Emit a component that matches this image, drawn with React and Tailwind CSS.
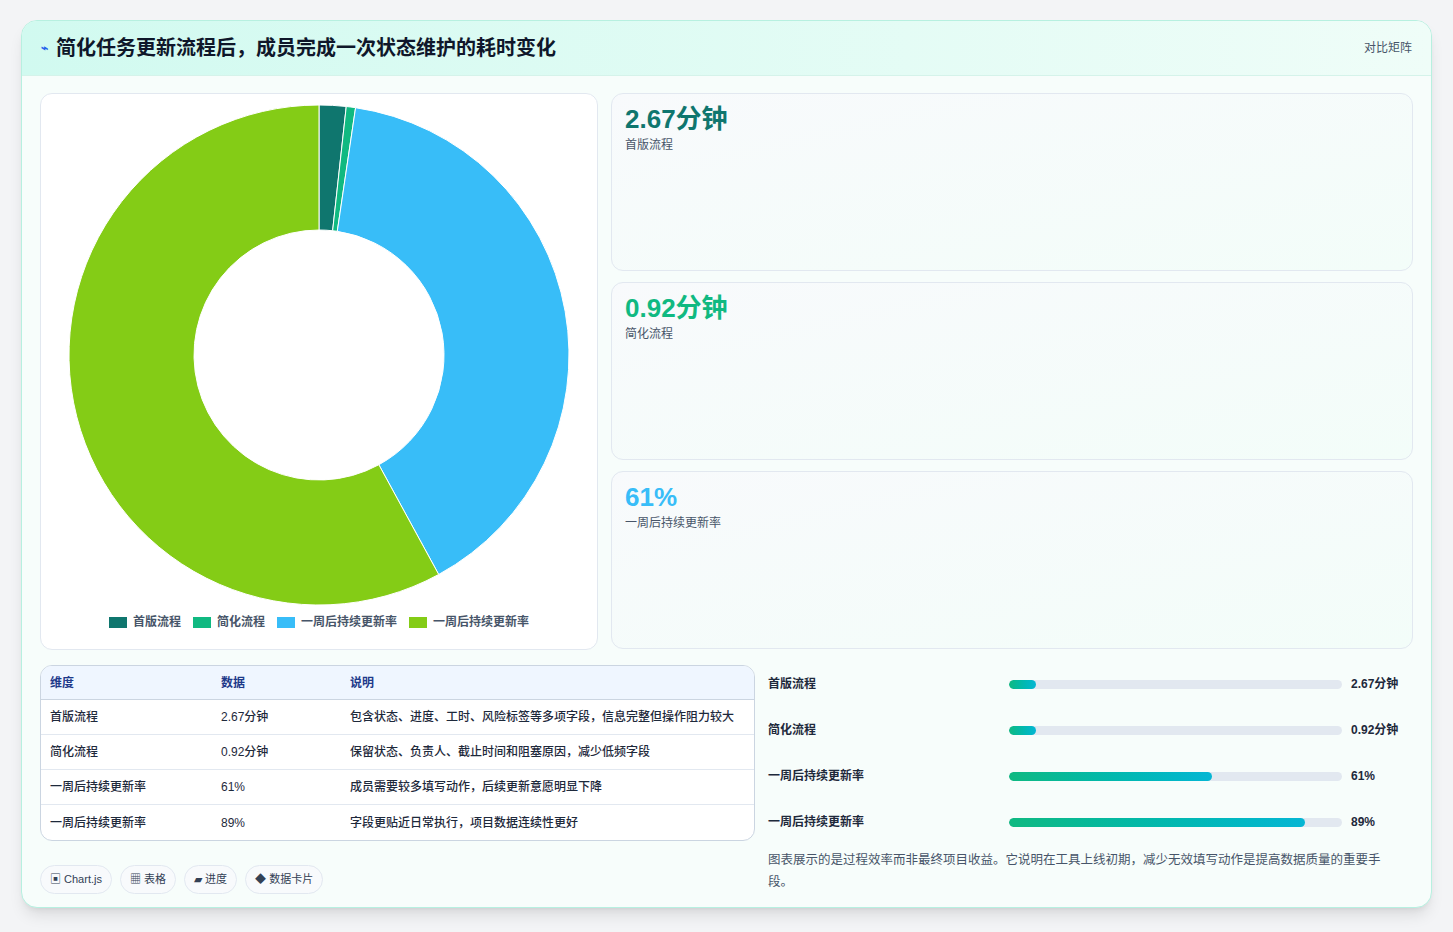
import React from "react";

const data = [
  { k: "首版流程", v: "2.67分钟", n: 2.67, c: "#0f766e", d: "包含状态、进度、工时、风险标签等多项字段，信息完整但操作阻力较大", p: 8 },
  { k: "简化流程", v: "0.92分钟", n: 0.92, c: "#10b981", d: "保留状态、负责人、截止时间和阻塞原因，减少低频字段", p: 8 },
  { k: "一周后持续更新率", v: "61%", n: 61, c: "#38bdf8", d: "成员需要较多填写动作，后续更新意愿明显下降", p: 61 },
  { k: "一周后持续更新率", v: "89%", n: 89, c: "#84cc16", d: "字段更贴近日常执行，项目数据连续性更好", p: 89 },
];

function Donut() {
  const total = data.reduce((s, d) => s + d.n, 0);
  const cx = 250, cy = 250, R = 250, r = 125;
  let a = 0;
  const pt = (ang, rad) => [cx + rad * Math.sin(ang), cy - rad * Math.cos(ang)];
  return (
    <svg width="500" height="500" viewBox="0 0 500 500">
      {data.map((d, i) => {
        const a0 = a;
        const a1 = a + (d.n / total) * Math.PI * 2;
        a = a1;
        const large = a1 - a0 > Math.PI ? 1 : 0;
        const [x0, y0] = pt(a0, R), [x1, y1] = pt(a1, R), [x2, y2] = pt(a1, r), [x3, y3] = pt(a0, r);
        return (
          <path key={i} fill={d.c} stroke="#fff" strokeWidth="1"
            d={`M${x0} ${y0}A${R} ${R} 0 ${large} 1 ${x1} ${y1}L${x2} ${y2}A${r} ${r} 0 ${large} 0 ${x3} ${y3}Z`} />
        );
      })}
    </svg>
  );
}

const stats = [
  { v: "2.67分钟", l: "首版流程", c: "text-[#0f766e]" },
  { v: "0.92分钟", l: "简化流程", c: "text-[#10b981]" },
  { v: "61%", l: "一周后持续更新率", c: "text-[#38bdf8]" },
];

export default function App() {
  return (
    <div className="min-h-[932px] bg-[#f3f4f6] pt-5 px-[21px] pb-5" style={{ fontFamily: '"Liberation Sans","Noto Sans CJK SC",sans-serif' }}>
      <div className="bg-[#f7fdfb] rounded-2xl border border-[#b7f0e0] shadow-lg overflow-hidden">
        <div className="h-[55px] flex items-center justify-between px-[19px] bg-gradient-to-r from-[#d1faf0] to-[#effdf8] border-b border-[#d5f3ea]">
          <div className="flex items-center gap-2">
            <span className="text-[#2563eb] text-[12px] font-bold">⌁</span>
            <span className="text-[20px] font-bold text-[#0f172a]">简化任务更新流程后，成员完成一次状态维护的耗时变化</span>
          </div>
          <span className="text-[12px] text-[#475569]">对比矩阵</span>
        </div>
        <div className="px-[18px] pt-[17px] pb-[13px]">
          <div className="flex gap-[13px]">
            <div className="w-[558px] h-[557px] bg-white rounded-xl border border-[#e2e8f0] flex flex-col items-center pt-[11px]">
              <Donut />
              <div className="flex gap-3 mt-2 text-[12px] text-[#475569] font-bold">
                {data.map((d, i) => (
                  <div key={i} className="flex items-center gap-[6px]">
                    <span className="w-[18px] h-[11px] inline-block" style={{ background: d.c }} />
                    {d.k}
                  </div>
                ))}
              </div>
            </div>
            <div className="flex-1 flex flex-col gap-[11px]">
              {stats.map((s, i) => (
                <div key={i} className="h-[178px] rounded-xl border border-[#e2e8f0] bg-gradient-to-br from-[#f8fafc] to-[#f3fdf9] px-[13px] pt-[9px]">
                  <div className={`text-[26px] font-bold leading-[32px] ${s.c}`}>{s.v}</div>
                  <div className="text-[12px] text-[#475569] mt-[1px]">{s.l}</div>
                </div>
              ))}
            </div>
          </div>
          <div className="flex gap-[13px] mt-[15px]">
            <div className="w-[715px]">
              <div className="rounded-xl border border-[#cbd5e1] overflow-hidden bg-white text-[12px]">
                <div className="flex h-[34px] items-center bg-[#eff6ff] border-b border-[#cbd5e1] text-[#1e3a8a] font-bold">
                  <div className="w-[180px] pl-[9px]">维度</div>
                  <div className="w-[129px]">数据</div>
                  <div className="flex-1">说明</div>
                </div>
                {data.map((d, i) => (
                  <div key={i} className={`flex h-[35px] items-center text-[#1e293b] font-medium ${i < 3 ? "border-b border-[#e2e8f0]" : ""}`}>
                    <div className="w-[180px] pl-[9px]">{d.k}</div>
                    <div className="w-[129px]">{d.v}</div>
                    <div className="flex-1">{d.d}</div>
                  </div>
                ))}
              </div>
              <div className="flex gap-2 mt-[24px] text-[11px] text-[#334155]">
                {["▣ Chart.js", "▦ 表格", "▰ 进度", "◆ 数据卡片"].map((t) => (
                  <span key={t} className="px-[9px] h-[29px] flex items-center rounded-full border border-[#e2e8f0] bg-[#f8fafc]">{t}</span>
                ))}
              </div>
            </div>
            <div className="flex-1 -mt-[4px]">
              {data.map((d, i) => (
                <div key={i} className="flex items-center h-[46px] text-[12px] text-[#1e293b]">
                  <div className="w-[241px] font-bold">{d.k}</div>
                  <div className="w-[333px] h-[9px] rounded-full bg-[#e2e8f0] overflow-hidden">
                    <div className="h-full rounded-full bg-gradient-to-r from-[#10b981] to-[#06b6d4]" style={{ width: `${d.p}%` }} />
                  </div>
                  <div className="ml-[9px] font-bold">{d.v}</div>
                </div>
              ))}
              <p className="text-[12.5px] leading-[22px] text-[#475569] mt-[4px] pr-[8px]">图表展示的是过程效率而非最终项目收益。它说明在工具上线初期，减少无效填写动作是提高数据质量的重要手段。</p>
            </div>
          </div>
        </div>
      </div>
    </div>
  );
}
